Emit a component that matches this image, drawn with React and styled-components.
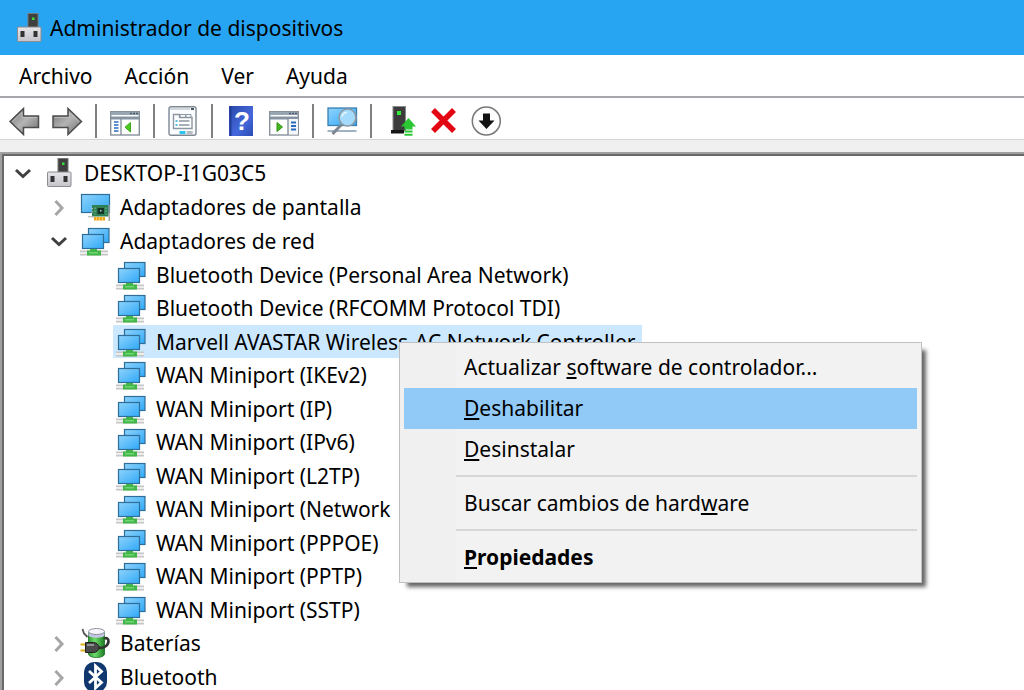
import React from 'react'
import { useState } from 'react';
import styled, { createGlobalStyle } from 'styled-components'

const menus = ['Archivo', 'Acción', 'Ver', 'Ayuda'];

const networkAdapters = [
    'Bluetooth Device (Personal Area Network)',
    'Bluetooth Device (RFCOMM Protocol TDI)',
    'Marvell AVASTAR Wireless-AC Network Controller',
    'WAN Miniport (IKEv2)',
    'WAN Miniport (IP)',
    'WAN Miniport (IPv6)',
    'WAN Miniport (L2TP)',
    'WAN Miniport (Network',
    'WAN Miniport (PPPOE)',
    'WAN Miniport (PPTP)',
    'WAN Miniport (SSTP)',
];

const categories = [
    { name: 'Adaptadores de pantalla', icon: DisplayIcon, devices: [] },
    { name: 'Adaptadores de red', icon: NetworkIcon, devices: networkAdapters },
    { name: 'Baterías', icon: BatteryIcon, devices: [] },
    { name: 'Bluetooth', icon: BluetoothIcon, devices: [] },
];

function Gradients() {
    return (
        <Defs aria-hidden="true">
            <defs>
                <linearGradient id="screen" x1="0" y1="0" x2="1" y2="1">
                    <stop offset="0" stopColor="#8fd3fb" />
                    <stop offset="1" stopColor="#2fa8f8" />
                </linearGradient>
                <linearGradient id="metal" x1="0" y1="0" x2="1" y2="1">
                    <stop offset="0" stopColor="#707070" />
                    <stop offset="0.5" stopColor="#b4b4b4" />
                    <stop offset="1" stopColor="#6c6c6c" />
                </linearGradient>
                <linearGradient id="help" x1="0" y1="0" x2="1" y2="1">
                    <stop offset="0" stopColor="#2a48a8" />
                    <stop offset="0.6" stopColor="#4468dc" />
                    <stop offset="1" stopColor="#2c4cb4" />
                </linearGradient>
                <linearGradient id="cell" x1="0" y1="0" x2="1" y2="0">
                    <stop offset="0" stopColor="#2f9a35" />
                    <stop offset="0.4" stopColor="#6fdc6c" />
                    <stop offset="1" stopColor="#1b7a22" />
                </linearGradient>
                <linearGradient id="body" x1="0" y1="0" x2="0" y2="1">
                    <stop offset="0" stopColor="#e6e6ea" />
                    <stop offset="1" stopColor="#c4c4ca" />
                </linearGradient>
            </defs>
        </Defs>
    )
}

function ComputerIcon() {
    return (
        <Icon viewBox="0 0 30 30" aria-hidden="true">
            <rect x="14" y="0.500" width="10" height="14" fill="#3f3f3f" stroke="#777" />
            <rect x="18" y="4.500" width="2.5" height="2.5" fill="#3be03b" />
            <rect x="3.5" y="14" width="23.5" height="14.500" rx="1" fill="url(#body)" stroke="#8b8b90" />
            <rect x="6.5" y="18" width="4" height="6" fill="#333" />
            <rect x="19.5" y="18" width="4" height="6" fill="#333" />
        </Icon>
    )
}

function NetworkIcon() {
    return (
        <Icon viewBox="0 0 30 30" aria-hidden="true">
            <rect x="8.5" y="2.5" width="20.5" height="14" fill="url(#screen)" stroke="#2f6e98" strokeWidth="1.200" />
            <rect x="2.5" y="8.5" width="21" height="14" fill="url(#screen)" stroke="#2f6e98" strokeWidth="1.200" />
            <rect x="0" y="24.500" width="28" height="5" fill="#c6c6c6" />
            <rect x="0" y="26" width="28" height="2" fill="#ececec" />
            <path d="M10 23h7v1.500h4v5h-14v-5h3z" fill="#43b649" />
            <rect x="9" y="26" width="9" height="1.500" fill="#6fd673" />
        </Icon>
    )
}

function DisplayIcon() {
    return (
        <Icon viewBox="0 0 30 30" aria-hidden="true">
            <rect x="1.5" y="2.500" width="28" height="18" fill="url(#screen)" stroke="#2f6e98" strokeWidth="1.200" />
            <rect x="12" y="13" width="16.500" height="11.500" fill="#2f8054" />
            <path d="M11 16.500h2M11 20h2" stroke="#bbb" />
            <rect x="17.500" y="16" width="6.500" height="6" fill="#16352a" />
            <rect x="20" y="18" width="1.500" height="1.500" fill="#a8d8bc" />
            <path d="M15 15.500v7M26 15.500v7" stroke="#7fc29a" strokeDasharray="1.500 1.500" />
            <rect x="14" y="25" width="11" height="3.500" fill="#f0a61c" />
            <path d="M16.500 25v3.500M19.500 25v3.500M22.500 25v3.500" stroke="#fbe08a" strokeWidth="0.700" />
            <path d="M8 24.800h6" stroke="#a8a8a8" />
            <path d="M29.200 13v16" stroke="#9a9a9a" strokeWidth="1.300" />
        </Icon>
    )
}

function BatteryIcon() {
    return (
        <Icon viewBox="0 0 30 30" aria-hidden="true">
            <path d="M8.500 4.500v21.500c0 2 3.500 3.500 8 3.500s8-1.500 8-3.500v-21.500z" fill="url(#cell)" stroke="#176b1d" strokeWidth="0.800" />
            <path d="M8.500 4v3.500c1 1.500 4 2.200 8 2.200s7-.7 8-2.200v-3.500z" fill="#c5c6e4" />
            <ellipse cx="16.500" cy="3.500" rx="8" ry="3" fill="#f5f5fb" stroke="#77778c" strokeWidth="0.800" />
            <path d="M2.500 1l1.500 4.500 3.500 3.500" fill="none" stroke="#555" strokeWidth="1.800" />
            <path d="M18 19.500c5 1.500 10-1.500 10.500-6 .2-3-2.500-4.500-4-2.500" fill="none" stroke="#333" strokeWidth="2.600" />
            <path d="M0.500 16.500h6M0.500 22.500h6" stroke="#e0ae16" strokeWidth="2" />
            <path d="M5.500 14.500h8c3 0 5.500 2.500 5.500 5s-2.500 5-5.500 5h-8z" fill="#4a4a4a" stroke="#1f1f1f" />
            <path d="M7 17h7" stroke="#a8a8a8" strokeWidth="1.500" />
        </Icon>
    )
}

function BluetoothIcon() {
    return (
        <Icon viewBox="0 0 30 30" aria-hidden="true">
            <rect x="4" y="0" width="23" height="30" rx="10" fill="#10386f" />
            <path d="M9 9l12.500 11.500-6 5.500v-22l6 5.500-12.500 11.500" fill="none" stroke="#fff" strokeWidth="2.800" />
        </Icon>
    )
}

function BackIcon() {
    return (
        <Icon viewBox="0 0 30 30" aria-hidden="true">
            <path d="M1 15.500l13.500-13v7.500h15v11.500h-15v7z" fill="url(#metal)" stroke="#4c4c4c" strokeWidth="1.500" />
            <path d="M3.500 15.500l9.500-9v5h15" fill="none" stroke="#c4c4c4" strokeWidth="0.800" />
        </Icon>
    )
}

function ForwardIcon() {
    return (
        <Icon viewBox="0 0 30 30" aria-hidden="true">
            <path d="M29.500 15.500l-13.500-13v7.500h-15v11.500h15v7z" fill="url(#metal)" stroke="#4c4c4c" strokeWidth="1.500" />
            <path d="M27 15.500l-9.500-9v5h-15" fill="none" stroke="#c4c4c4" strokeWidth="0.800" />
        </Icon>
    )
}

function PaneIcon({ action }) {
    return (
        <Icon viewBox="0 0 30 30" aria-hidden="true">
            <rect x="0.700" y="5.700" width="28.600" height="23.300" fill="#fff" stroke="#86919c" strokeWidth="1.400" />
            <rect x="1" y="6" width="28" height="3" fill="#98a5b3" />
            <rect x="1" y="10.500" width="28" height="3" fill="#8593a2" />
            <path d="M20 7.500h2M23 7.500h2M26 7.500h2" stroke="#4d5b6b" strokeWidth="1.500" />
            {action ? (
                <>
                    <rect x="19" y="13" width="10" height="15.500" fill="#f4f6f8" />
                    <path d="M19 13v16" stroke="#86919c" strokeWidth="1.400" />
                    <path d="M22 16.500h5M22 20h5M22 23.500h5" stroke="#2a6cc0" strokeWidth="1.800" />
                    <path d="M8 16.500v9l5.500-4.500z" fill="#43b91f" stroke="#2f8f14" />
                </>
            ) : (
                <>
                    <path d="M11 13v16" stroke="#86919c" strokeWidth="1.400" />
                    <path d="M4 16h4.500M4 19h4.500M4 22h4.500M4 25h4.500" stroke="#2a6cc0" strokeWidth="1.600" />
                    <path d="M20.500 16.500v9.500l-5.500-4.800z" fill="#4cc81f" stroke="#3aa818" />
                </>
            )}
        </Icon>
    )
}

function PropertiesIcon() {
    return (
        <Icon viewBox="0 0 30 30" aria-hidden="true">
            <rect x="1" y="0.700" width="27" height="28.600" rx="2" fill="#fbfcfd" stroke="#7d8893" strokeWidth="1.400" />
            <path d="M2 3h20" stroke="#c5cdd5" strokeWidth="1.500" />
            <path d="M23 3h3" stroke="#45515e" strokeWidth="2" />
            <path d="M5.500 22.500v-14h6v3h12.500v11z" fill="#fff" stroke="#8b97a3" strokeWidth="1.400" />
            <path d="M12 11.500v-3h5.500v3M18 11.500v-3h5v3" fill="none" stroke="#8b97a3" />
            <path d="M7.500 15h2M7.500 19h2" stroke="#1ba8dc" strokeWidth="1.600" />
            <path d="M11 15h10.500M11 19h10.500" stroke="#8b97a3" strokeWidth="1.600" />
            <rect x="11.500" y="25" width="6" height="3" fill="#2cc4ef" />
            <rect x="18.700" y="25" width="6" height="3" fill="#b5bcc4" />
        </Icon>
    )
}

function HelpIcon() {
    return (
        <Icon viewBox="0 0 30 30" aria-hidden="true">
            <rect x="3" y="0" width="24" height="30" fill="url(#help)" />
            <path d="M4.500 0v30" stroke="#223d98" strokeWidth="2" />
            <HelpMark x="16" y="24">?</HelpMark>
        </Icon>
    )
}

function ScanIcon() {
    return (
        <Icon viewBox="0 0 30 30" aria-hidden="true">
            <rect x="1" y="2" width="28.500" height="17.500" fill="url(#screen)" stroke="#3a7fae" strokeWidth="1.300" />
            <path d="M0.500 25h29" stroke="#8aa0b4" strokeWidth="1.600" />
            <path d="M14.500 18.500l-9 9.500" stroke="#7d8792" strokeWidth="3" />
            <circle cx="20.500" cy="11.500" r="8.500" fill="#a4dafb" stroke="#8d9aa6" strokeWidth="1.600" />
            <path d="M15 11c.5-3 2.500-4.500 5-4.500" fill="none" stroke="#e4f5ff" strokeWidth="1.400" />
        </Icon>
    )
}

function UpdateIcon() {
    return (
        <Icon viewBox="0 0 30 30" aria-hidden="true">
            <rect x="8" y="0.500" width="12.500" height="24" fill="#3c3c3c" stroke="#8a8a8a" />
            <rect x="12" y="5" width="4" height="4" fill="#38e838" />
            <rect x="6" y="24" width="13" height="3.500" fill="#161616" />
            <path d="M23.500 12l7.500 8.500h-3.500v3h-8v-3h-3.500z" fill="#2bc634" />
            <path d="M19.500 25.500h8M19.500 28.800h8" stroke="#2bc634" strokeWidth="2" />
        </Icon>
    )
}

function UninstallIcon() {
    return (
        <Icon viewBox="0 0 30 30" aria-hidden="true">
            <path d="M5 4l21 21M26 4l-21 21" stroke="#e30613" strokeWidth="5.500" />
        </Icon>
    )
}

function DisableIcon() {
    return (
        <Icon viewBox="0 0 30 30" aria-hidden="true">
            <circle cx="15.300" cy="15" r="14" fill="#fdfdfd" stroke="#777" strokeWidth="1.500" />
            <path d="M12 7.500h7v7h4.500l-8 8.500-8-8.500h4.500z" fill="#111" />
        </Icon>
    )
}

function Chevron({ open }) {
    return (
        <ChevronIcon viewBox="0 0 18 18" aria-hidden="true">
            {open
                ? <path d="M2 6l7 6.500 7-6.500" fill="none" stroke="#404040" strokeWidth="3" />
                : <path d="M5.500 3l6.500 7-6.500 7" fill="none" stroke="#a6a6a6" strokeWidth="3" />}
        </ChevronIcon>
    )
}

function ContextMenu() {
    return (
        <Menu role="menu">
            <MenuItem role="menuitem">Actualizar <u>s</u>oftware de controlador...</MenuItem>
            <MenuItem role="menuitem" $active><u>D</u>eshabilitar</MenuItem>
            <MenuItem role="menuitem"><u>D</u>esinstalar</MenuItem>
            <MenuLine />
            <MenuItem role="menuitem">Buscar cambios de hard<u>w</u>are</MenuItem>
            <MenuLine />
            <MenuItem role="menuitem" $bold><u>P</u>ropiedades</MenuItem>
        </Menu>
    )
}

export default function App() {
    const [selected, setSelected] = useState(networkAdapters[2]);
    const [expanded, setExpanded] = useState(['Adaptadores de red']);

    function toggle(name) {
        setExpanded(expanded.includes(name) ? expanded.filter((item) => item !== name) : [...expanded, name])
    }

    return (
        <Window>
            <GlobalStyle />
            <Gradients />
            <TitleBar>
                <ComputerIcon />
                <Title>Administrador de dispositivos</Title>
            </TitleBar>
            <MenuBar>
                {menus.map((menu) => <MenuButton key={menu}>{menu}</MenuButton>)}
            </MenuBar>
            <Toolbar>
                <Tool aria-label="Atrás"><BackIcon /></Tool>
                <Tool aria-label="Adelante"><ForwardIcon /></Tool>
                <Separator />
                <Tool aria-label="Mostrar u ocultar árbol"><PaneIcon /></Tool>
                <Separator />
                <Tool aria-label="Propiedades"><PropertiesIcon /></Tool>
                <Separator />
                <Tool aria-label="Ayuda"><HelpIcon /></Tool>
                <Tool aria-label="Mostrar u ocultar acciones"><PaneIcon action /></Tool>
                <Separator />
                <Tool aria-label="Buscar cambios de hardware"><ScanIcon /></Tool>
                <Separator />
                <Tool aria-label="Actualizar software de controlador"><UpdateIcon /></Tool>
                <Tool aria-label="Desinstalar"><UninstallIcon /></Tool>
                <Tool aria-label="Deshabilitar"><DisableIcon /></Tool>
            </Toolbar>
            <TreePanel>
                <Row>
                    <Toggle aria-label="Contraer DESKTOP-I1G03C5"><Chevron open /></Toggle>
                    <Label><ComputerIcon />DESKTOP-I1G03C5</Label>
                </Row>
                <Branch>
                    {categories.map(({ name, icon: CategoryIcon, devices }) => {
                        const open = expanded.includes(name);
                        return (
                            <li key={name}>
                                <Row>
                                    <Toggle aria-label={name} aria-expanded={open} onClick={() => toggle(name)}>
                                        <Chevron open={open} />
                                    </Toggle>
                                    <Label onClick={() => setSelected(name)} $selected={selected === name}>
                                        <CategoryIcon />{name}
                                    </Label>
                                </Row>
                                {open && (
                                    <Devices>
                                        {devices.map((device) => (
                                            <DeviceRow key={device}>
                                                <Label onClick={() => setSelected(device)} $selected={selected === device}>
                                                    <NetworkIcon />{device}
                                                </Label>
                                            </DeviceRow>
                                        ))}
                                    </Devices>
                                )}
                            </li>
                        )
                    })}
                </Branch>
            </TreePanel>
            <ContextMenu />
        </Window>
    )
}

const GlobalStyle = createGlobalStyle`
    * {
        box-sizing: border-box;
    }

    body {
        margin: 0;
        background-color: white;
        color: black;
        font-family: "Noto Sans", "Open Sans", sans-serif;
        font-size: 21px;
        line-height: 28px;
    }

    button {
        margin: 0;
        padding: 0;
        border: none;
        background: none;
        color: inherit;
        font: inherit;
        text-align: left;
        white-space: nowrap;
    }
`;

const Window = styled.div`
    display: flex;
    flex-direction: column;
    height: 100vh;
    background-color: #f0f0f0;
    overflow: hidden;
`;

const Defs = styled.svg`
    position: absolute;
    width: 0;
    height: 0;
`;

const Icon = styled.svg`
    display: block;
    flex: none;
    width: 30px;
    height: 30px;
    overflow: visible;
`;

const ChevronIcon = styled.svg`
    width: 18px;
    height: 18px;
`;

const HelpMark = styled.text`
    fill: white;
    font-family: "Liberation Sans", sans-serif;
    font-size: 26px;
    font-weight: bold;
    text-anchor: middle;
`;

const TitleBar = styled.header`
    display: flex;
    align-items: center;
    flex: none;
    gap: 6px;
    height: 55px;
    padding-left: 14px;
    background-color: #27a4f2;
`;

const Title = styled.h1`
    margin: 0;
    font-size: 21px;
    font-weight: normal;
`;

const MenuBar = styled.nav`
    display: flex;
    align-items: center;
    flex: none;
    gap: 32px;
    height: 41px;
    padding-left: 19px;
    background-color: white;
`;

const MenuButton = styled.button``;

const Toolbar = styled.div`
    display: flex;
    align-items: center;
    flex: none;
    gap: 13px;
    height: 44px;
    padding: 4px 9px 0;
    background-color: white;
    border-top: 2px solid #a8a8ac;
    border-bottom: 1px solid #d4d4d4;
`;

const Tool = styled.button``;

const Separator = styled.span`
    width: 2px;
    height: 34px;
    background-color: #808080;
`;

const TreePanel = styled.main`
    flex: 1;
    min-height: 0;
    margin-top: 12px;
    padding: 2px 0 0 3px;
    background-color: white;
    border-top: 2px solid #a0a0a0;
    border-left: 2px solid #a0a0a0;
    box-shadow: inset 2px 2px 0 #696969;
    overflow: hidden;
`;

const Row = styled.div`
    display: flex;
    height: 34px;
`;

const Branch = styled.ul`
    margin: 0;
    padding: 0 0 0 36px;
    list-style: none;
`;

const Devices = styled.ul`
    margin: 0;
    padding: 0 0 0 72px;
    list-style: none;
`;

const DeviceRow = styled.li`
    display: flex;
    height: 34px;

    &:nth-child(odd) {
        height: 33px;
    }
`;

const Toggle = styled.button`
    display: flex;
    align-items: center;
    justify-content: center;
    width: 36px;
`;

const Label = styled.button`
    display: flex;
    align-items: center;
    gap: 10px;
    padding: 0 7px 0 3px;
    background-color: ${(props) => props.$selected ? '#cce8ff' : 'transparent'};
`;

const Menu = styled.div`
    position: absolute;
    top: 342px;
    left: 399px;
    display: flex;
    flex-direction: column;
    width: 523px;
    padding: 4px;
    background: linear-gradient(to right, #f0f0f0 56px, #f2f2f2 56px);
    border: 1px solid #c0c0c0;
    box-shadow: 6px 6px 4px -2px rgba(0, 0, 0, 0.6);
`;

const MenuItem = styled.button`
    height: 41px;
    padding: 0 0 2px 60px;
    background-color: ${(props) => props.$active ? '#91c9f7' : 'transparent'};
    font-weight: ${(props) => props.$bold ? 'bold' : 'normal'};

    u {
        text-decoration-thickness: 2px;
        text-underline-offset: 2px;
        text-decoration-skip-ink: none;
    }
`;

const MenuLine = styled.hr`
    width: calc(100% - 52px);
    margin: 5px 0 6px 52px;
    border: none;
    border-top: 2px solid #d7d7d7;
`;
